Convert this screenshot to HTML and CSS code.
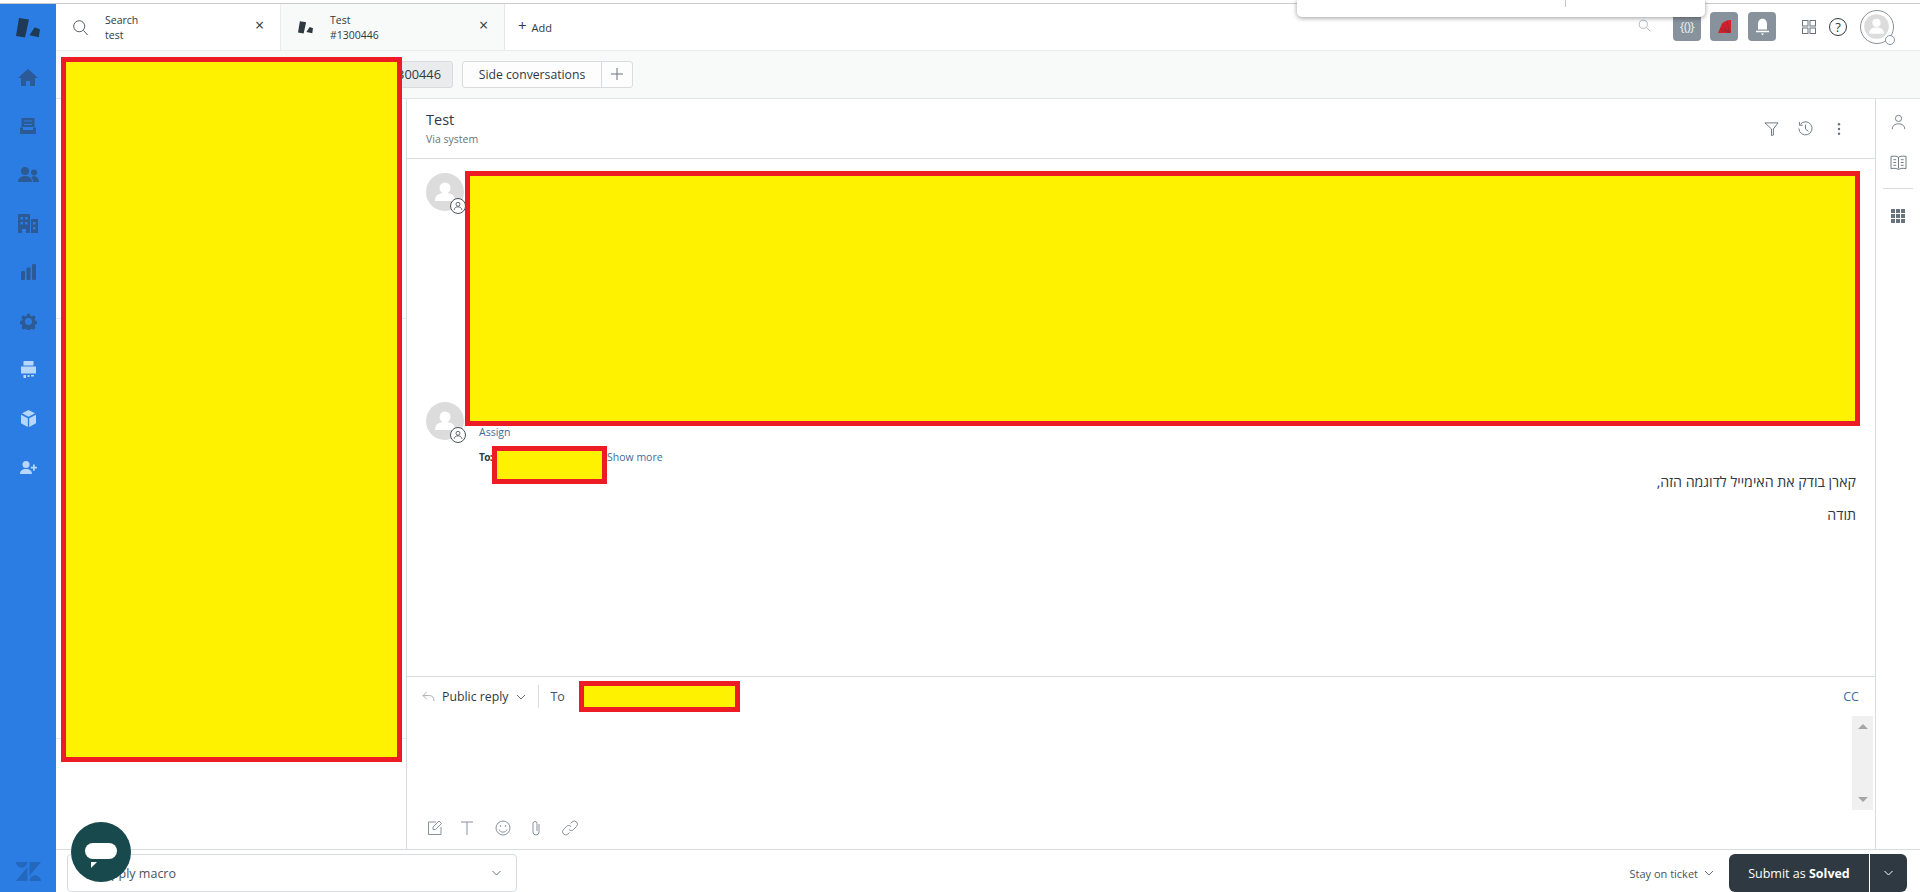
FILE: index.html
```html
<!DOCTYPE html>
<html lang="en">
<head>
<meta charset="utf-8">
<title>Test #1300446</title>
<link rel="stylesheet" href="styles.css">
</head>
<body>
<div class="top-strip"></div>
<div class="app">
  <nav class="sidebar">
    <div class="nav-item"><svg class="ico-logo" viewBox="0 0 24 20"><path d="M3 0l10 1.500-4 18L0 18zM18.700 9.300l5.300 2-1.200 8-9.400-2z"/></svg></div>
    <div class="nav-item"><svg class="ico-nav dark nav-home" viewBox="0 0 20 17"><path d="M10 0L0 9h3v8h5v-5h4v5h5V9h3z"/></svg></div>
    <div class="nav-item"><svg class="ico-nav dark nav-views" viewBox="0 0 16 16"><path d="M1.500 0h13v9h-13zM0 9.500h3v2.500h10V9.500h3V16H0z"/><path class="nav-cut" d="M4 2.500h8v1H4zM4 6h8v1H4z"/></svg></div>
    <div class="nav-item"><svg class="ico-nav dark nav-customers" viewBox="0 0 21 15"><circle cx="7" cy="4" r="4"/><circle cx="16" cy="5.500" r="3"/><path d="M0 15c0-4 3-6 7-6s7 2 7 6zM15 15c0-2-.5-4-2-5 1-.5 2-.7 3-.7 3 0 5 2.500 5 5.700z"/></svg></div>
    <div class="nav-item"><svg class="ico-nav dark nav-org" viewBox="0 0 20 19"><path fill-rule="evenodd" d="M0 0h12v19H8v-4H4v4H0zM2.500 3v2.500h2.500V3zM7 3v2.500h2.500V3zM2.500 8v2.500h2.500V8zM7 8v2.500h2.500V8zM13 5h7v14h-7zM15 8v2.500h2.500V8zM15 13v2.500h2.500V13z"/></svg></div>
    <div class="nav-item"><svg class="ico-nav dark nav-bars" viewBox="0 0 15 16"><rect x="0" y="7" width="4" height="9" rx="1.200"/><rect x="5.500" y="3.500" width="4" height="12.500" rx="1.200"/><rect x="11" y="0" width="4" height="16" rx="1.200"/></svg></div>
    <div class="nav-item"><svg class="ico-nav dark nav-gear" viewBox="0 0 24 24"><path fill-rule="evenodd" d="M10 1h4l.7 3 2.100.900 2.600-1.600 2.800 2.800-1.600 2.600.9 2.100 3 .7v4l-3 .7-.9 2.100 1.600 2.600-2.800 2.800-2.600-1.600-2.100.9-.7 3h-4l-.7-3-2.100-.9-2.600 1.600-2.800-2.800 1.600-2.600-.9-2.100-3-.7v-4l3-.7.9-2.100-1.600-2.600 2.800-2.800 2.600 1.600 2.100-.9zM12 7a5 5 0 100 10 5 5 0 000-10z"/></svg></div>
    <div class="nav-item"><svg class="ico-nav light nav-print" viewBox="0 0 15 17"><path d="M2.500 0h10v4.500h-10zM0 5.500h15v7H0zM2.500 14H5v3H2.500zM6.500 14h2v2h-2zM10 14h3v1.500h-3z"/></svg></div>
    <div class="nav-item"><svg class="ico-nav light nav-cube" viewBox="0 0 15 17"><path d="M7.500 0L14 3.200 7.500 6.700 1 3.200zM0 4.700l6.800 3.600V17L0 13.300zM15 4.700L8.200 8.300V17l6.800-3.700z"/></svg></div>
    <div class="nav-item"><svg class="ico-nav light nav-add" viewBox="0 0 17 13"><circle cx="6" cy="3.500" r="3.500"/><path d="M0 13c0-3.500 2.500-5 6-5s6 1.500 6 5zM13 3.500h1.800v2.200H17v1.800h-2.200v2.200H13V7.500h-2.200V5.700H13z"/></svg></div>
    <div class="nav-item nav-bottom"><svg class="ico-z" viewBox="0 0 25 19"><path d="M0 0h11.500a5.750 5.750 0 01-11.500 0zM11.500 5v14H0zM13.500 0H25L13.500 14zM13.500 19a5.750 5.750 0 0111.500 0z"/></svg></div>
  </nav>

  <div class="main">
    <header class="tabbar">
      <div class="tab tab-search">
        <svg class="ico-tab" viewBox="0 0 20 20"><circle cx="8.500" cy="8.500" r="6.500"/><path d="M13.500 13.500l5 5.500"/></svg>
        <div class="tab-text"><span>Search</span><span>test</span></div>
        <span class="tab-close">×</span>
      </div>
      <div class="tab tab-ticket">
        <svg class="ico-tablogo" viewBox="0 0 24 20"><path d="M3 0l10 1.500-4 18L0 18zM18.700 9.300l5.300 2-1.200 8-9.400-2z"/></svg>
        <div class="tab-text"><span>Test</span><span>#1300446</span></div>
        <span class="tab-close">×</span>
      </div>
      <div class="tab-add"><span class="plus">+</span><span>Add</span></div>
      <div class="top-actions">
        <svg class="ico-search" viewBox="0 0 16 16"><circle cx="6.500" cy="6.500" r="5"/><path d="M10.500 10.500l4.500 4.500"/></svg>
        <div class="app-box box-first"><span class="curly">{()}</span></div>
        <div class="app-box"><svg class="ico-fan" viewBox="0 0 15 15"><path d="M1 14L5 4.500C7.500 2 10.500 .8 14 1v13z"/><path class="fan-cut" d="M3 10c3-.5 7 .5 9 4M6 5l5 9M10 2l2.500 12M4 12h10"/></svg></div>
        <div class="app-box box-last"><svg class="ico-bell" viewBox="0 0 18 22"><path d="M9 1c4 0 5.500 3 5.500 7v6h-11V8C3.500 4 5 1 9 1zM1 15.500h16v2H1zM7 19h4l-2 2z"/></svg></div>
        <svg class="ico-grid4" viewBox="0 0 14 14"><rect x=".5" y=".5" width="5.500" height="5.500"/><rect x="8" y=".5" width="5.500" height="5.500"/><rect x=".5" y="8" width="5.500" height="5.500"/><rect x="8" y="8" width="5.500" height="5.500"/></svg>
        <div class="help">?</div>
        <div class="me">
          <svg class="me-pic" viewBox="0 0 34 34"><circle cx="17" cy="17" r="13.500" class="av-bg"/><circle cx="17" cy="13" r="4.500" class="av-fg"/><path class="av-fg" d="M9 25c0-5 3-7 8-7s8 2 8 7z"/></svg>
          <span class="me-status"></span>
        </div>
      </div>
    </header>

    <div class="subheader">
      <div class="crumb">Ticket #1300446</div>
      <div class="side-conv"><span class="side-label">Side conversations</span><span class="side-plus"><svg viewBox="0 0 12 12"><path d="M6 0v12M0 6h12"/></svg></span></div>
    </div>

    <div class="workspace">
      <aside class="ticket-panel">
        <div class="panel-sec panel-sec-a"></div>
        <div class="panel-sec panel-sec-b"></div>
      </aside>

      <section class="conversation">
        <div class="conv-head">
          <div>
            <div class="conv-title">Test</div>
            <div class="conv-via">Via system</div>
          </div>
          <div class="conv-tools">
            <svg class="ico-tool" viewBox="0 0 16 16"><path d="M1 2h14L10 8.500V15l-2 .5V8.500z"/></svg>
            <svg class="ico-tool" viewBox="0 0 16 16"><path d="M2.500 3.500A7 7 0 111 8M1.500 1v3.500H5M8 4v4.500l3 2.500"/></svg>
            <svg class="ico-dots" viewBox="0 0 4 16"><circle cx="2" cy="2.500" r="1.400"/><circle cx="2" cy="8" r="1.400"/><circle cx="2" cy="13.500" r="1.400"/></svg>
          </div>
        </div>

        <div class="thread">
          <article class="msg msg-first">
            <div class="avatar">
              <svg viewBox="0 0 38 38"><circle cx="19" cy="19" r="19" class="av-bg"/><circle cx="19" cy="15" r="5.500" class="av-fg"/><path class="av-fg" d="M9 28c0-6 4-8 10-8s10 2 10 8z"/></svg>
              <span class="badge"><svg viewBox="0 0 14 14"><circle cx="7" cy="5" r="2.300"/><path d="M2.500 11.500c.5-2.500 2-3.500 4.500-3.500s4 1 4.500 3.500"/></svg></span>
            </div>
            <div class="redact redact-msg"></div>
          </article>
          <article class="msg msg-second">
            <div class="avatar">
              <svg viewBox="0 0 38 38"><circle cx="19" cy="19" r="19" class="av-bg"/><circle cx="19" cy="15" r="5.500" class="av-fg"/><path class="av-fg" d="M9 28c0-6 4-8 10-8s10 2 10 8z"/></svg>
              <span class="badge"><svg viewBox="0 0 14 14"><circle cx="7" cy="5" r="2.300"/><path d="M2.500 11.500c.5-2.500 2-3.500 4.500-3.500s4 1 4.500 3.500"/></svg></span>
            </div>
            <div class="msg-body">
              <div class="link small">Assign</div>
              <div class="to-row">
                <span class="to-label">To:</span>
                <div class="redact redact-to"></div>
                <span class="link small to-more">Show more</span>
              </div>
              <div class="msg-text" dir="rtl" lang="he">
                <p>קארן בודק את האימייל לדוגמה הזה,</p>
                <p>תודה</p>
              </div>
            </div>
          </article>
        </div>

        <div class="composer">
          <div class="reply-row">
            <svg class="ico-reply" viewBox="0 0 14 12"><path d="M5 1L1 5l4 4M1 5h7c3 0 5 2 5 6"/></svg>
            <span class="reply-type">Public reply</span>
            <svg class="ico-chev" viewBox="0 0 10 6"><path d="M1 1l4 4 4-4"/></svg>
            <span class="reply-sep"></span>
            <span class="reply-to">To</span>
            <div class="redact redact-recipient"></div>
            <span class="link cc">CC</span>
          </div>
          <div class="editor">
            <div class="scrollbar"><span class="arrow-up"></span><span class="arrow-down"></span></div>
          </div>
          <div class="editor-tools">
            <svg class="ico-ed" viewBox="0 0 16 16"><path d="M9 2H1.500v12.500H14V7M6 9.500V7l6-6 2.500 2.500-6 6z"/></svg>
            <svg class="ico-ed ico-ed-t" viewBox="0 0 16 16"><path d="M2 2h12M8 2v13"/></svg>
            <svg class="ico-ed" viewBox="0 0 16 16"><circle cx="8" cy="8" r="7"/><circle cx="5.500" cy="6" r=".5"/><circle cx="10.500" cy="6" r=".5"/><path d="M4 9.500c1 3.500 7 3.500 8 0"/></svg>
            <svg class="ico-ed" viewBox="0 0 16 16"><path d="M11 4v8a3 3 0 01-6 0V3.500a2 2 0 014 0V11"/></svg>
            <svg class="ico-ed" viewBox="0 0 16 16"><path d="M7 9.500a3 3 0 004.500 0l3-3a3 3 0 00-4.500-4.500L8.500 3.500M9 6.500a3 3 0 00-4.500 0l-3 3A3 3 0 006 14l1.500-1.500"/></svg>
          </div>
        </div>
      </section>

      <aside class="rail">
        <svg class="ico-rail" viewBox="0 0 16 18"><circle cx="8" cy="5" r="3.500"/><path d="M1 17c0-4 3-6 7-6s7 2 7 6"/></svg>
        <svg class="ico-rail ico-rail-book" viewBox="0 0 18 16"><path d="M1 1.500c3-.5 6-.5 8 1 2-1.500 5-1.500 8-1v13c-3-.5-6-.5-8 1-2-1.500-5-1.500-8-1zM9 2.500v12M3.500 5h3M3.500 8h3M3.500 11h3M11.500 5h3M11.500 8h3M11.500 11h3"/></svg>
        <span class="rail-sep"></span>
        <svg class="ico-rail-grid" viewBox="0 0 14 14"><path d="M0 0h4v4H0zM5 0h4v4H5zM10 0h4v4h-4zM0 5h4v4H0zM5 5h4v4H5zM10 5h4v4h-4zM0 10h4v4H0zM5 10h4v4H5zM10 10h4v4h-4z"/></svg>
      </aside>
    </div>

    <footer class="actionbar">
      <div class="macro">
        <svg class="ico-macro" viewBox="0 0 14 14"><path d="M8 1L2 8h5l-1 5 6-7H7z"/></svg>
        <span class="macro-label">Apply macro</span>
        <svg class="ico-chev ico-chev-macro" viewBox="0 0 10 6"><path d="M1 1l4 4 4-4"/></svg>
      </div>
      <div class="submit-group">
        <span class="stay">Stay on ticket</span>
        <svg class="ico-chev ico-chev-stay" viewBox="0 0 10 6"><path d="M1 1l4 4 4-4"/></svg>
        <div class="submit-main">Submit as&nbsp;<b>Solved</b></div>
        <div class="submit-more"><svg class="ico-chev-light" viewBox="0 0 10 6"><path d="M1 1l4 4 4-4"/></svg></div>
      </div>
    </footer>

    <div class="redact redact-panel"></div>
  </div>
</div>

<div class="popup"><span class="popup-sep"></span></div>
<div class="chat-bubble"><span class="chat-pill"></span><span class="chat-tail"></span></div>
</body>
</html>
```

FILE: styles.css
```css
* { box-sizing: border-box; }
html, body { margin: 0; height: 892px; overflow: hidden; }
body { font-family: "Open Sans", "Noto Sans", sans-serif; font-size: 12px; color: #2f3941; background: #fff; display: flex; flex-direction: column; }
svg { display: block; flex: none; }
.top-strip { height: 4px; flex: none; border-bottom: 1px solid #c9cbcd; }

.app { flex: 1; display: flex; min-height: 0; }

.sidebar { width: 56px; flex: none; background: #2b7de3; display: flex; flex-direction: column; align-items: center; }
.nav-item { height: 48.8px; flex: none; display: flex; align-items: center; justify-content: center; }
.nav-bottom { margin-top: auto; height: 42px; }
.ico-logo { width: 24px; height: 20px; fill: #1f3a57; }
.ico-nav.dark { fill: #2b5a94; }
.ico-nav.light { fill: #b7d6fa; }
.nav-home { width: 20px; height: 17px; }
.nav-views { width: 16px; height: 16px; }
.nav-customers { width: 21px; height: 15px; }
.nav-org { width: 20px; height: 19px; }
.nav-bars { width: 15px; height: 16px; }
.nav-gear { width: 17px; height: 17px; }
.nav-print { width: 15px; height: 17px; }
.nav-cube { width: 15px; height: 17px; }
.nav-add { width: 17px; height: 13px; }
.nav-cut { fill: #2b7de3; }
.ico-z { width: 25px; height: 19px; fill: #2468bd; }

.main { flex: 1; min-width: 0; display: flex; flex-direction: column; position: relative; }

.tabbar { height: 47px; flex: none; display: flex; align-items: stretch; border-bottom: 1px solid #e9ebed; }
.tab { width: 225px; flex: none; display: flex; align-items: center; position: relative; }
.tab-search { width: 224px; }
.tab-ticket { background: #f8f9f9; border-right: 1px solid #e4e7e9; border-left: 1px solid #e9ebed; }
.ico-tab { width: 17px; height: 17px; margin-left: 16px; fill: none; stroke: #49545c; stroke-width: 1.100; }
.ico-tablogo { width: 15px; height: 13px; margin-left: 17px; fill: #2f3941; }
.tab-text { display: flex; flex-direction: column; font-size: 10.500px; line-height: 15px; margin-left: 16px; padding-top: 2px; }
.tab-ticket .tab-text { margin-left: 17px; }
.tab-close { position: absolute; left: 199px; top: 11px; font-size: 16px; line-height: 20px; color: #2f3941; }
.tab-ticket .tab-close { left: 198px; }
.tab-add { display: flex; align-items: center; margin-left: 13px; font-size: 11px; gap: 5px; }
.plus { font-size: 15px; line-height: 15px; margin-top: -3px; }
.top-actions { margin-left: auto; display: flex; align-items: center; padding-right: 26px; }
.ico-search { width: 13px; height: 13px; fill: none; stroke: #a3abb2; stroke-width: 1; margin-top: -3px; }
.app-box { width: 28px; height: 29px; border-radius: 4px; background: #87929d; display: flex; align-items: center; justify-content: center; margin-right: 9px; margin-top: -1px; }
.box-first { margin-left: 22px; }
.box-last { margin-right: 25px; margin-left: 1px; }
.curly { color: #eaf0f5; font-size: 12.500px; letter-spacing: -.6px; }
.ico-fan { width: 15px; height: 15px; fill: #d51f2a; }
.fan-cut { stroke: #8a2a35; stroke-width: .7; fill: none; }
.ico-bell { width: 15px; height: 18px; fill: #fff; }
.ico-grid4 { width: 14px; height: 14px; fill: none; stroke: #68737d; stroke-width: 1; margin-left: 1px; }
.help { width: 18px; height: 18px; border: 1px solid #2f3941; border-radius: 50%; margin-left: 13px; font-size: 13px; line-height: 16px; text-align: center; color: #2f3941; }
.me { width: 34px; height: 34px; margin-left: 13px; position: relative; border: 1.500px solid #87929d; border-radius: 50%; }
.me-pic { width: 31px; height: 31px; }
.me-status { position: absolute; right: -2px; bottom: -2px; width: 10px; height: 10px; border-radius: 50%; background: #fff; border: 1px solid #87929d; }
.av-bg { fill: #dcdcdc; }
.av-fg { fill: #fff; }

.subheader { height: 48px; flex: none; background: #f8f9f9; border-bottom: 1px solid #e2e4e6; display: flex; align-items: center; padding-bottom: 1px; }
.crumb { margin-left: 244px; width: 153px; height: 27px; text-align: right; padding-right: 11px; background: #e9ebed; border: 1px solid #d8dcde; border-radius: 3px; font-size: 12.800px; line-height: 25px; color: #2f3941; }
.side-conv { margin-left: 9px; height: 27px; width: 171px; display: flex; background: #fdfdfd; border: 1px solid #d8dcde; border-radius: 3px; }
.side-label { width: 139px; flex: none; border-right: 1px solid #d8dcde; text-align: center; font-size: 12.200px; line-height: 25px; }
.side-plus { flex: 1; display: flex; align-items: center; justify-content: center; }
.side-plus svg { width: 12px; height: 12px; fill: none; stroke: #68737d; stroke-width: 1; }

.workspace { flex: 1; min-height: 0; display: flex; }
.ticket-panel { width: 351px; flex: none; border-right: 1px solid #d8dcde; display: flex; flex-direction: column; }
.panel-sec { border-bottom: 1px solid #e9ebed; }
.panel-sec-a { height: 220px; }
.panel-sec-b { height: 420px; }

.conversation { flex: 1; min-width: 0; display: flex; flex-direction: column; }
.conv-head { height: 60px; flex: none; border-bottom: 1px solid #d8dcde; display: flex; justify-content: space-between; padding: 11px 0 0 19px; }
.conv-title { font-size: 14.500px; line-height: 20px; }
.conv-via { font-size: 10.500px; line-height: 14px; margin-top: 2px; color: #68737d; }
.conv-tools { display: flex; align-items: flex-start; padding: 11px 34px 0 0; gap: 19px; }
.ico-tool { width: 15px; height: 15px; fill: none; stroke: #68737d; stroke-width: 1; }
.ico-dots { width: 4px; height: 14px; fill: #68737d; margin: 1px 0 0 5px; }

.thread { flex: 1; min-height: 0; padding: 12px 15px 0 19px; }
.msg { display: flex; align-items: flex-start; }
.msg-first { height: 231px; gap: 1px; }
.msg-second { gap: 15px; }
.avatar { width: 38px; height: 38px; flex: none; position: relative; }
.msg-first .avatar { margin-top: 2px; }
.avatar > svg { width: 38px; height: 38px; }
.badge { position: absolute; left: 24px; top: 25px; width: 16px; height: 16px; background: #fff; border: 1px solid #49545c; border-radius: 50%; display: flex; align-items: center; justify-content: center; }
.badge svg { width: 12px; height: 12px; fill: none; stroke: #49545c; stroke-width: 1; }

.redact { background: #fff200; border: 5px solid #ed1c24; }
.redact-msg { flex: 1; height: 255px; }
.redact-to { width: 115px; height: 38px; flex: none; position: relative; }
.redact-recipient { width: 161px; height: 31px; flex: none; margin-left: 14px; }
.redact-panel { position: absolute; left: 5px; top: 53px; width: 341px; height: 705px; }

.msg-body { flex: 1; min-width: 0; padding-top: 22px; }
.link { color: #3d6d9e; }
.small { font-size: 10.500px; line-height: 16px; }
.to-row { display: flex; align-items: flex-start; margin-top: 6px; }
.to-label { width: 13px; font-size: 10px; font-weight: 700; line-height: 16px; margin-top: 3px; white-space: nowrap; letter-spacing: -.6px; }
.to-more { margin-top: 3px; }
.msg-text { margin: -12px 4px 0 0; font-size: 14.200px; line-height: 20px; color: #2f3941; }
.msg-text p { margin: 0 0 13px; }

.composer { height: 173px; flex: none; border-top: 1px solid #d8dcde; display: flex; flex-direction: column; }
.reply-row { height: 31px; flex: none; margin-top: 4px; display: flex; align-items: center; padding: 0 16px 0 15px; }
.ico-reply { width: 13px; height: 11px; fill: none; stroke: #a3abb2; stroke-width: 1; }
.reply-type { font-size: 12.300px; margin-left: 7px; }
.ico-chev { width: 10px; height: 6px; fill: none; stroke: #68737d; stroke-width: 1; }
.reply-row .ico-chev { margin-left: 8px; }
.reply-sep { width: 1px; height: 23px; background: #d8dcde; margin-left: 12px; }
.reply-to { font-size: 12.500px; margin-left: 11px; color: #49545c; }
.cc { margin-left: auto; font-size: 12.500px; }
.editor { flex: 1; min-height: 0; display: flex; justify-content: flex-end; padding: 4px 2px 0 0; }
.scrollbar { width: 21px; height: 94px; background: #f0f0f0; display: flex; flex-direction: column; justify-content: space-between; align-items: center; padding: 8px 0; }
.arrow-up { width: 0; height: 0; border: 5px solid transparent; border-top: 0; border-bottom: 5px solid #a6a6a6; }
.arrow-down { width: 0; height: 0; border: 5px solid transparent; border-bottom: 0; border-top: 5px solid #a6a6a6; }
.editor-tools { height: 39px; flex: none; display: flex; align-items: center; gap: 17.800px; padding: 0 0 3px 20px; }
.ico-ed { width: 16px; height: 16px; fill: none; stroke: #87929d; stroke-width: 1; }
.ico-ed-t { margin: 0 2px 0 -2px; }

.rail { width: 45px; flex: none; border-left: 1px solid #d8dcde; display: flex; flex-direction: column; align-items: center; padding-top: 15px; }
.ico-rail { width: 15px; height: 16px; fill: none; stroke: #68737d; stroke-width: 1; }
.ico-rail-book { width: 17px; height: 15px; margin-top: 25px; }
.rail-sep { width: 30px; height: 1px; background: #d8dcde; margin-top: 18px; }
.ico-rail-grid { width: 14px; height: 14px; fill: #68737d; margin-top: 20px; }

.actionbar { height: 43px; flex: none; border-top: 1px solid #d8dcde; display: flex; justify-content: space-between; padding-top: 4px; }
.macro { width: 450px; height: 38px; margin-left: 11px; border: 1px solid #d8dcde; border-radius: 4px; display: flex; align-items: center; padding: 0 14px 0 13px; }
.ico-macro { width: 14px; height: 14px; fill: none; stroke: #68737d; stroke-width: 1; }
.macro-label { font-size: 12.500px; margin-left: 8px; color: #49545c; }
.ico-chev-macro { margin-left: auto; width: 11px; }
.submit-group { display: flex; align-items: center; padding-right: 13px; }
.stay { font-size: 11px; color: #49545c; }
.ico-chev-stay { margin: 0 15px 0 6px; }
.submit-main { width: 140px; height: 38px; background: #2f3941; color: #fff; border-radius: 6px 0 0 6px; font-size: 12.500px; display: flex; align-items: center; justify-content: center; }
.submit-main b { font-weight: 700; }
.submit-more { width: 37px; height: 38px; margin-left: 1px; background: #2f3941; border-radius: 0 6px 6px 0; display: flex; align-items: center; justify-content: center; }
.ico-chev-light { width: 11px; height: 6px; fill: none; stroke: #fff; stroke-width: 1; }

.popup { position: absolute; left: 1297px; top: 0; width: 408px; height: 17px; background: #fff; border-radius: 0 0 5px 5px; box-shadow: 0 1px 5px rgba(0, 0, 0, .4); }
.popup-sep { position: absolute; left: 268px; top: 0; width: 1px; height: 7px; background: #c5c5c5; }

.chat-bubble { position: absolute; left: 71px; top: 822px; width: 60px; height: 60px; border-radius: 50%; background: #17494d; }
.chat-pill { position: absolute; left: 14px; top: 21px; width: 32px; height: 16px; border-radius: 8px; background: #fff; }
.chat-tail { position: absolute; left: 20px; top: 40px; width: 0; height: 0; border-top: 6px solid #fff; border-right: 6px solid transparent; }
```
